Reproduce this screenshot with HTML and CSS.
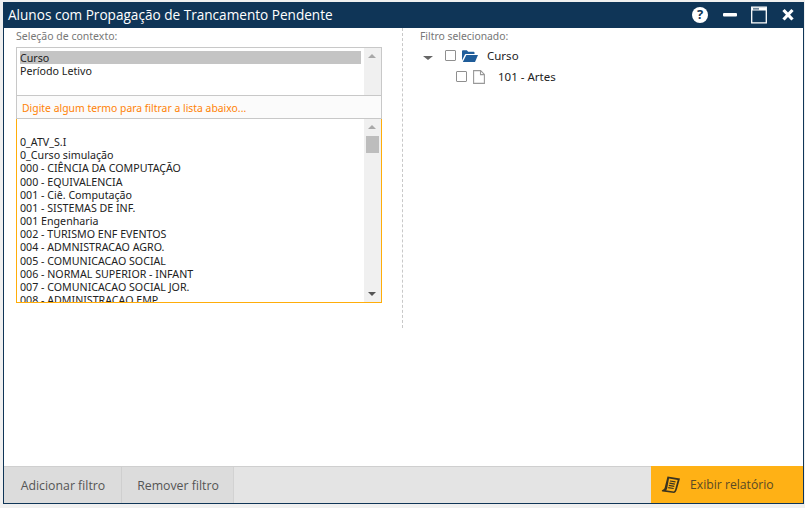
FILE: index.html
```html
<!DOCTYPE html>
<html lang="pt-BR">
<head>
<meta charset="utf-8">
<title>Alunos com Propagação de Trancamento Pendente</title>
<link rel="stylesheet" href="styles.css">
</head>
<body>
<div class="window">
  <header class="titlebar">
    <h1 class="title">Alunos com Propagação de Trancamento Pendente</h1>
    <div class="controls">
      <svg class="ctl" width="18" height="18" viewBox="0 0 18 18"><circle cx="9" cy="9" r="8" fill="#fff"/><text x="9" y="13" text-anchor="middle" class="q">?</text></svg>
      <svg class="ctl" width="14" height="18" viewBox="0 0 14 18"><rect x="0" y="7" width="14" height="3.4" rx="1" fill="#fff"/></svg>
      <svg class="ctl" width="16" height="18" viewBox="0 0 16 18"><path d="M.7 1.200h14.600v15.600H.7z" fill="none" stroke="#fff" stroke-width="1.300"/><rect x="1" y="1.500" width="14" height="3" fill="#fff"/><rect x="2" y="2.400" width="6" height="1" fill="#0f3557"/></svg>
      <svg class="ctl close" width="12" height="18" viewBox="0 0 12 18"><path d="M1.500 4l9 9.500M10.500 4l-9 9.500" stroke="#fff" stroke-width="3.200" fill="none"/></svg>
    </div>
  </header>
  <main class="content">
    <section class="left">
      <div class="label">Seleção de contexto:</div>
      <div class="box">
        <div class="ctx">
          <ul class="items">
            <li class="sel">Curso</li>
            <li>Período Letivo</li>
          </ul>
          <div class="scroll"><span class="up"></span></div>
        </div>
        <div class="search">Digite algum termo para filtrar a lista abaixo...</div>
        <div class="values">
          <ul class="items">
            <li>&nbsp;</li>
            <li>0_ATV_S.I</li>
            <li>0_Curso simulação</li>
            <li>000 - CIÊNCIA DA COMPUTAÇÃO</li>
            <li>000 - EQUIVALENCIA</li>
            <li>001 - Ciê. Computação</li>
            <li>001 - SISTEMAS DE INF.</li>
            <li>001 Engenharia</li>
            <li>002 - TURISMO ENF EVENTOS</li>
            <li>004 - ADMNISTRACAO AGRO.</li>
            <li>005 - COMUNICACAO SOCIAL</li>
            <li>006 - NORMAL SUPERIOR - INFANT</li>
            <li>007 - COMUNICACAO SOCIAL JOR.</li>
            <li>008 - ADMINISTRACAO EMP.</li>
          </ul>
          <div class="scroll"><span class="up"></span><span class="thumb"></span><span class="down"></span></div>
        </div>
      </div>
    </section>
    <section class="right">
      <div class="label">Filtro selecionado:</div>
      <div class="node">
        <span class="caret"></span>
        <span class="check"></span>
        <svg class="folder" width="16" height="12" viewBox="0 0 16 12"><path d="M0 1.500C0 .7.5.2 1.200.2h3.600l1.400 1.600h5.300c.6 0 1 .4 1 1V4H4.200C3.400 4 3 4.300 2.700 5L0 10.500z" fill="#1f5c99"/><path d="M4.300 5H16l-3 7H.8z" fill="#1f5c99"/></svg>
        <span class="node-text">Curso</span>
      </div>
      <div class="node child">
        <span class="check"></span>
        <svg class="file" width="12" height="14" viewBox="0 0 12 14"><path d="M.6.600h7l3.800 3.800v9H.6zM7.500.600v4h4" fill="#fff" stroke="#999" stroke-width="1.100"/></svg>
        <span class="node-text">101 - Artes</span>
      </div>
    </section>
  </main>
  <footer class="footer">
    <button class="btn add">Adicionar filtro</button>
    <button class="btn rem">Remover filtro</button>
    <span class="spacer"></span>
    <button class="btn run">
      <svg width="20" height="18" viewBox="0 0 20 18"><path d="M6.500 .5l12.500 2-3 10.500c-.5 1.800-1.200 3.500-3 4L1.500 15.500C.5 15.300.6 14.500 1.300 14c1-.5 1.800-.7 2.300-2z" fill="#3a3320"/><path d="M8 2.600l8.700 1.400-2.600 9.500c-.3 1-.7 1.600-1.300 1.900L5 14.200c.6-.5 1-1.100 1.200-2z" fill="#ffb115"/><path d="M9 5l5.500.9M8.400 7.200l5.500.9M7.800 9.400l5.500.9M7.200 11.600l5.500.9" stroke="#3a3320" stroke-width="1.200"/></svg>
      <span>Exibir relatório</span>
    </button>
  </footer>
</div>
</body>
</html>
```
FILE: styles.css
```css
* { box-sizing: border-box; }
html, body { margin: 0; height: 100%; }
body {
  background: #f0f0f0;
  padding: 2px 0 4px 3px;
  font-family: "Noto Sans", "DejaVu Sans", sans-serif;
  overflow: hidden;
}
.window {
  width: 801px;
  height: 502px;
  display: flex;
  flex-direction: column;
  background: #fff;
  border: 1px solid #0f3557;
  border-top: 0;
}
.titlebar {
  height: 26px;
  flex: none;
  margin: 0 -1px;
  padding: 0 10px 0 5px;
  background: #0f3557;
  display: flex;
  align-items: center;
  justify-content: space-between;
}
.title {
  margin: 0;
  color: #fff;
  font: 400 13.6px/26px "Open Sans", sans-serif;
  white-space: nowrap;
}
.controls { display: flex; align-items: center; gap: 14px; }
.ctl { display: block; }
.close { margin-left: 1px; }
.q { font: 700 13px "Open Sans", sans-serif; fill: #0f3557; }
.content {
  flex: 1;
  min-height: 0;
  display: flex;
  align-items: flex-start;
  font-size: 10.67px;
  line-height: 13.17px;
  color: #222;
}
.left { width: 399px; height: 300px; padding: 1px 20px 0 12px; border-right: 1px dashed #c8c8c8; }
.right { flex: 1; padding: 1px 0 0 17px; }
.label { height: 18px; font-size: 10.5px; line-height: 14px; color: #777; }
.box { width: 366px; }
.ctx {
  height: 48px;
  display: flex;
  border: 1px solid #c8c8c8;
  border-bottom: 0;
}
.items {
  flex: 1;
  min-width: 0;
  margin: 0;
  padding: 3px 3px 0 3px;
  list-style: none;
  overflow: hidden;
  white-space: nowrap;
}
.items li { height: 13.17px; line-height: 14.5px; }
.sel { background: #c4c4c4; }
.scroll {
  position: relative;
  width: 17px;
  flex: none;
  background: #f0f0f0;
}
.up, .down {
  position: absolute;
  left: 4px;
  width: 0;
  height: 0;
  border-left: 4px solid transparent;
  border-right: 4px solid transparent;
}
.up { top: 6px; border-bottom: 4px solid #a8a8a8; }
.down { bottom: 6px; border-top: 4px solid #555; }
.thumb { position: absolute; top: 17px; left: 2px; width: 13px; height: 17px; background: #bdbdbd; }
.search {
  height: 24px;
  padding: 0 5px;
  font-size: 10.4px;
  line-height: 24px;
  color: #ff8205;
  background: #fbfbfb;
  border: 1px solid #c8c8c8;
}
.values {
  height: 184px;
  display: flex;
  border: 1px solid #ffad0a;
  border-top: 0;
}
.node { height: 21px; display: flex; align-items: center; font-size: 11.5px; padding-left: 3px; }
.right .label { height: 16px; font-size: 10.35px; }
.caret {
  width: 0;
  height: 0;
  margin: 4px 12px 0 0;
  border-left: 5px solid transparent;
  border-right: 5px solid transparent;
  border-top: 4px solid #666;
}
.check {
  width: 11px;
  height: 11px;
  border: 1.5px solid #8f8f8f;
  border-radius: 1px;
  background: #fff;
}
.folder { margin: 0 9px 0 6px; }
.child { padding-left: 36px; }
.file { margin: 0 13px 0 6px; }
.node-text { color: #222; }
.footer {
  height: 37px;
  flex: none;
  display: flex;
  background: #e4e4e4;
  border-top: 1px solid #cfcfcf;
}
.btn {
  border: 0;
  padding: 0;
  background: #dcdcdc;
  color: #555;
  font: 400 12.3px "Open Sans", sans-serif;
}
.add { width: 118px; padding-left: 1px; border-right: 1px solid #cfcfcf; }
.rem { width: 112px; padding-left: 1px; border-right: 1px solid #d2d2d2; }
.spacer { flex: 1; }
.run {
  width: 152px;
  margin-top: -1px;
  background: #ffb115;
  color: #5a4a25;
  display: flex;
  align-items: center;
  gap: 9px;
  padding-left: 10px;
  font-size: 12.2px;
}
```
